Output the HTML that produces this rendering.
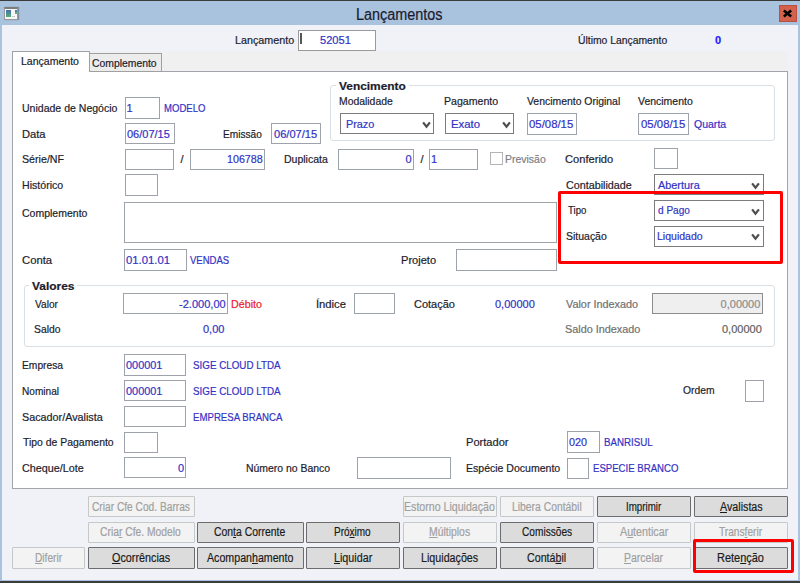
<!DOCTYPE html><html><head><meta charset='utf-8'><style>
html,body{margin:0;padding:0;width:800px;height:583px;overflow:hidden;background:#f1f1f8}
.b{position:absolute}.t{position:absolute;white-space:nowrap;transform-origin:0 0;-webkit-text-stroke:0.2px currentColor;font-family:"Liberation Sans",sans-serif}
u{text-decoration:underline;text-underline-offset:1px}
</style></head><body>
<div class='b' style='left:0px;top:0px;width:800px;height:583px;background:#a9c3de'></div>
<div class='b' style='left:0px;top:0px;width:800px;height:1px;background:#3c3c3c'></div>
<div class='b' style='left:0px;top:581px;width:800px;height:2px;background:#3c3c3c'></div>
<div class='b' style='left:2px;top:25px;width:796px;height:555px;background:#f1f1f8'></div>
<div class='b' style='left:4px;top:7px;width:14px;height:13px;background:#f7f7f7;border:1px solid #9a9a9a;border-top:2px solid #7c7c7c;box-sizing:border-box;box-shadow:1px 0 1px #7a8aa0'></div>
<div class='b' style='left:6px;top:10px;width:5px;height:7px;background:linear-gradient(#4a6db8,#52b070)'></div>
<div class='b' style='left:15px;top:10px;width:1.6px;height:4px;background:linear-gradient(#4a70b8,#60c070)'></div>
<div class='b' style='left:12px;top:16px;width:3px;height:1px;background:#c8c8c8'></div>
<div class='b' style='left:779px;top:5px;width:18px;height:17px;background:#d4614b;border:1px solid #b85040;box-sizing:border-box'></div>
<div class='b' style='left:298px;top:30px;width:78px;height:21px;background:#fff;border:1px solid #9a9a9a;box-sizing:border-box'></div>
<div class='b' style='left:300px;top:33px;width:2px;height:11px;background:#555'></div>
<div class='b' style='left:12px;top:51px;width:776px;height:20px;background:#f0f0f0'></div>
<div class='b' style='left:12px;top:71px;width:776px;height:418px;background:#fff;border:1px solid #a2a3ab;box-sizing:border-box'></div>
<div class='b' style='left:89px;top:53px;width:73px;height:19px;background:#ececec;border:1px solid #a0a0a0;box-sizing:border-box'></div>
<div class='b' style='left:12px;top:51px;width:78px;height:21px;background:#fff;border:1px solid #a0a0a8;border-bottom:none;box-sizing:border-box'></div>
<div class='b' style='left:330px;top:85px;width:445px;height:56px;border:1px solid #d8e0e6;border-radius:3px;box-sizing:border-box'></div>
<div class='b' style='left:336px;top:80px;width:73px;height:10px;background:#fff'></div>
<div class='b' style='left:340px;top:113px;width:94px;height:21px;background:#fff;border:1px solid #7c7c7c;box-sizing:border-box'></div>
<div class='b' style='left:445px;top:113px;width:69px;height:21px;background:#fff;border:1px solid #7c7c7c;box-sizing:border-box'></div>
<div class='b' style='left:527px;top:113px;width:50px;height:21.5px;background:#fff;border:1px solid #9ea2aa;box-sizing:border-box'></div>
<div class='b' style='left:638px;top:113px;width:51px;height:21.5px;background:#fff;border:1px solid #9ea2aa;box-sizing:border-box'></div>
<div class='b' style='left:124.5px;top:97px;width:35.5px;height:21.5px;background:#fff;border:1px solid #9ea2aa;box-sizing:border-box'></div>
<div class='b' style='left:124.5px;top:122.5px;width:50px;height:21.5px;background:#fff;border:1px solid #9ea2aa;box-sizing:border-box'></div>
<div class='b' style='left:271px;top:122.5px;width:50px;height:21.5px;background:#fff;border:1px solid #9ea2aa;box-sizing:border-box'></div>
<div class='b' style='left:124.5px;top:148.75px;width:49.5px;height:20.75px;background:#fff;border:1px solid #9ea2aa;box-sizing:border-box'></div>
<div class='b' style='left:190px;top:148.75px;width:74.5px;height:20.75px;background:#fff;border:1px solid #9ea2aa;box-sizing:border-box'></div>
<div class='b' style='left:338px;top:148.75px;width:75.5px;height:20.75px;background:#fff;border:1px solid #9ea2aa;box-sizing:border-box'></div>
<div class='b' style='left:429px;top:148.75px;width:49px;height:20.75px;background:#fff;border:1px solid #9ea2aa;box-sizing:border-box'></div>
<div class='b' style='left:490px;top:152.2px;width:13px;height:12.8px;background:#fff;border:1px solid #b4b4b4;box-sizing:border-box'></div>
<div class='b' style='left:653.5px;top:148.4px;width:24px;height:21px;background:#fff;border:1px solid #9ea2aa;box-sizing:border-box'></div>
<div class='b' style='left:653.5px;top:174.4px;width:110.1px;height:21.1px;background:#fff;border:1px solid #7c7c7c;box-sizing:border-box'></div>
<div class='b' style='left:124.5px;top:174.25px;width:33.5px;height:21.25px;background:#fff;border:1px solid #9ea2aa;box-sizing:border-box'></div>
<div class='b' style='left:124px;top:201.6px;width:433px;height:41.4px;background:#fff;border:1px solid #9ea2aa;box-sizing:border-box'></div>
<div class='b' style='left:653.5px;top:200px;width:110.1px;height:21.2px;background:#fff;border:1px solid #7c7c7c;box-sizing:border-box'></div>
<div class='b' style='left:653.5px;top:225.7px;width:110.1px;height:20.9px;background:#fff;border:1px solid #7c7c7c;box-sizing:border-box'></div>
<div class='b' style='left:124px;top:249px;width:62.5px;height:21.6px;background:#fff;border:1px solid #9ea2aa;box-sizing:border-box'></div>
<div class='b' style='left:455.75px;top:249.25px;width:101.25px;height:21.5px;background:#fff;border:1px solid #9ea2aa;box-sizing:border-box'></div>
<div class='b' style='left:24px;top:285px;width:751px;height:62px;border:1px solid #d8e0e6;border-radius:3px;box-sizing:border-box'></div>
<div class='b' style='left:29px;top:280px;width:48px;height:11px;background:#fff'></div>
<div class='b' style='left:123.2px;top:293px;width:104.8px;height:21.25px;background:#fff;border:1px solid #9ea2aa;box-sizing:border-box'></div>
<div class='b' style='left:353.6px;top:293px;width:41.4px;height:21.1px;background:#fff;border:1px solid #9ea2aa;box-sizing:border-box'></div>
<div class='b' style='left:652.2px;top:292.9px;width:110.4px;height:21.6px;background:#efefef;border:1px solid #8c8c8c;box-sizing:border-box'></div>
<div class='b' style='left:124.2px;top:354.2px;width:62.3px;height:21.4px;background:#fff;border:1px solid #9ea2aa;box-sizing:border-box'></div>
<div class='b' style='left:124.2px;top:380.1px;width:62.3px;height:21px;background:#fff;border:1px solid #9ea2aa;box-sizing:border-box'></div>
<div class='b' style='left:744.6px;top:380.3px;width:19.4px;height:21.5px;background:#fff;border:1px solid #9ea2aa;box-sizing:border-box'></div>
<div class='b' style='left:124.2px;top:406px;width:62.3px;height:21px;background:#fff;border:1px solid #9ea2aa;box-sizing:border-box'></div>
<div class='b' style='left:124.2px;top:431.5px;width:33.6px;height:21px;background:#fff;border:1px solid #9ea2aa;box-sizing:border-box'></div>
<div class='b' style='left:567.3px;top:431px;width:33px;height:22.3px;background:#fff;border:1px solid #9ea2aa;box-sizing:border-box'></div>
<div class='b' style='left:124.2px;top:457.1px;width:62.3px;height:21.4px;background:#fff;border:1px solid #9ea2aa;box-sizing:border-box'></div>
<div class='b' style='left:356.9px;top:457px;width:94.5px;height:21.6px;background:#fff;border:1px solid #9ea2aa;box-sizing:border-box'></div>
<div class='b' style='left:567.3px;top:457.5px;width:21.8px;height:21px;background:#fff;border:1px solid #9ea2aa;box-sizing:border-box'></div>
<div class='b' style='left:88px;top:496px;width:106.5px;height:21px;background:#f3f3f3;border:1px solid #c4c8c8;border-radius:1px;box-sizing:border-box'></div>
<div class='b' style='left:403px;top:496px;width:94px;height:21px;background:#f3f3f3;border:1px solid #c4c8c8;border-radius:1px;box-sizing:border-box'></div>
<div class='b' style='left:499.5px;top:496px;width:94.5px;height:21px;background:#f3f3f3;border:1px solid #c4c8c8;border-radius:1px;box-sizing:border-box'></div>
<div class='b' style='left:597px;top:496px;width:93.5px;height:21px;background:#dcdcdc;border:1px solid #6c6c6c;border-radius:1px;box-sizing:border-box'></div>
<div class='b' style='left:694px;top:496px;width:93.5px;height:21px;background:#dcdcdc;border:1px solid #6c6c6c;border-radius:1px;box-sizing:border-box'></div>
<div class='b' style='left:88px;top:521.5px;width:106.5px;height:21.5px;background:#f3f3f3;border:1px solid #c4c8c8;border-radius:1px;box-sizing:border-box'></div>
<div class='b' style='left:196.5px;top:521.5px;width:107px;height:21.5px;background:#dcdcdc;border:1px solid #6c6c6c;border-radius:1px;box-sizing:border-box'></div>
<div class='b' style='left:306px;top:521.5px;width:94px;height:21.5px;background:#dcdcdc;border:1px solid #6c6c6c;border-radius:1px;box-sizing:border-box'></div>
<div class='b' style='left:403px;top:521.5px;width:94px;height:21.5px;background:#f3f3f3;border:1px solid #c4c8c8;border-radius:1px;box-sizing:border-box'></div>
<div class='b' style='left:499.5px;top:521.5px;width:94.5px;height:21.5px;background:#dcdcdc;border:1px solid #6c6c6c;border-radius:1px;box-sizing:border-box'></div>
<div class='b' style='left:597px;top:521.5px;width:93.5px;height:21.5px;background:#f3f3f3;border:1px solid #c4c8c8;border-radius:1px;box-sizing:border-box'></div>
<div class='b' style='left:694px;top:521.5px;width:93.5px;height:21.5px;background:#f3f3f3;border:1px solid #c4c8c8;border-radius:1px;box-sizing:border-box'></div>
<div class='b' style='left:12px;top:547px;width:73px;height:22px;background:#f3f3f3;border:1px solid #c4c8c8;border-radius:1px;box-sizing:border-box'></div>
<div class='b' style='left:88px;top:547px;width:106.5px;height:22px;background:#dcdcdc;border:1px solid #6c6c6c;border-radius:1px;box-sizing:border-box'></div>
<div class='b' style='left:196.5px;top:547px;width:107px;height:22px;background:#dcdcdc;border:1px solid #6c6c6c;border-radius:1px;box-sizing:border-box'></div>
<div class='b' style='left:306px;top:547px;width:94px;height:22px;background:#dcdcdc;border:1px solid #6c6c6c;border-radius:1px;box-sizing:border-box'></div>
<div class='b' style='left:403px;top:547px;width:94px;height:22px;background:#dcdcdc;border:1px solid #6c6c6c;border-radius:1px;box-sizing:border-box'></div>
<div class='b' style='left:499.5px;top:547px;width:94.5px;height:22px;background:#dcdcdc;border:1px solid #6c6c6c;border-radius:1px;box-sizing:border-box'></div>
<div class='b' style='left:597px;top:547px;width:93.5px;height:22px;background:#f3f3f3;border:1px solid #c4c8c8;border-radius:1px;box-sizing:border-box'></div>
<div class='b' style='left:694px;top:547px;width:93.5px;height:22px;background:#dcdcdc;border:1px solid #6c6c6c;border-radius:1px;box-sizing:border-box'></div>
<div class='b' style='left:558px;top:191px;width:225px;height:73px;border:3px solid #f00;border-radius:2px;box-sizing:border-box'></div>
<div class='b' style='left:693px;top:539.3px;width:101.3px;height:34.2px;border:3px solid #f00;border-radius:2px;box-sizing:border-box'></div>
<svg class='b' style='left:421.5px;top:120.7px' width='9' height='8' viewBox='0 0 9 8'><path d='M1.1 1.3 L4.5 5.7 L7.9 1.3' fill='none' stroke='#4e4e4e' stroke-width='2.2'/></svg>
<svg class='b' style='left:501.5px;top:120.7px' width='9' height='8' viewBox='0 0 9 8'><path d='M1.1 1.3 L4.5 5.7 L7.9 1.3' fill='none' stroke='#4e4e4e' stroke-width='2.2'/></svg>
<svg class='b' style='left:751.1px;top:182.14999999999998px' width='9' height='8' viewBox='0 0 9 8'><path d='M1.1 1.3 L4.5 5.7 L7.9 1.3' fill='none' stroke='#4e4e4e' stroke-width='2.2'/></svg>
<svg class='b' style='left:751.1px;top:207.79999999999998px' width='9' height='8' viewBox='0 0 9 8'><path d='M1.1 1.3 L4.5 5.7 L7.9 1.3' fill='none' stroke='#4e4e4e' stroke-width='2.2'/></svg>
<svg class='b' style='left:751.1px;top:233.34999999999997px' width='9' height='8' viewBox='0 0 9 8'><path d='M1.1 1.3 L4.5 5.7 L7.9 1.3' fill='none' stroke='#4e4e4e' stroke-width='2.2'/></svg>
<svg class='b' style='left:781px;top:8px' width='13' height='11' viewBox='0 0 13 11'><path d='M2.8 2.5 L10.2 8.5 M10.2 2.5 L2.8 8.5' stroke='#000' stroke-width='2.5' stroke-linecap='butt'/></svg>
<div class='t' style='left:356.35px;top:6.51px;font-size:16px;line-height:16px;transform:scale(0.9000,1.0);color:#1a1a30;font-weight:normal'>Lançamentos</div>
<div class='t' style='left:235.22px;top:35.14px;font-size:11px;line-height:11px;transform:scale(0.9763,1.0);color:#1c1c2c;font-weight:normal'>Lançamento</div>
<div class='t' style='left:320.29px;top:35.14px;font-size:11px;line-height:11px;transform:scale(1.0103,1.0);color:#3232c4;font-weight:normal'>52051</div>
<div class='t' style='left:577.81px;top:35.44px;font-size:11px;line-height:11px;transform:scale(0.9415,1.0);color:#1c1c2c;font-weight:normal'>Último Lançamento</div>
<div class='t' style='left:715.00px;top:35.44px;font-size:11px;line-height:11px;transform:scale(1.0000,1.0);color:#1e1eff;font-weight:bold'>0</div>
<div class='t' style='left:20.64px;top:56.14px;font-size:11px;line-height:11px;transform:scale(0.9576,1.0);color:#1c1c2c;font-weight:normal'>Lançamento</div>
<div class='t' style='left:91.96px;top:58.44px;font-size:11px;line-height:11px;transform:scale(0.9433,1.0);color:#1c1c2c;font-weight:normal'>Complemento</div>
<div class='t' style='left:338.75px;top:80.82px;font-size:11.5px;line-height:11.5px;transform:scale(1.0352,1.0);color:#1c1c2c;font-weight:bold'>Vencimento</div>
<div class='t' style='left:338.66px;top:96.44px;font-size:11px;line-height:11px;transform:scale(0.9446,1.0);color:#1c1c2c;font-weight:normal'>Modalidade</div>
<div class='t' style='left:443.54px;top:96.44px;font-size:11px;line-height:11px;transform:scale(0.9636,1.0);color:#1c1c2c;font-weight:normal'>Pagamento</div>
<div class='t' style='left:526.70px;top:95.94px;font-size:11px;line-height:11px;transform:scale(0.9469,1.0);color:#1c1c2c;font-weight:normal'>Vencimento Original</div>
<div class='t' style='left:638.00px;top:95.94px;font-size:11px;line-height:11px;transform:scale(0.9518,1.0);color:#1c1c2c;font-weight:normal'>Vencimento</div>
<div class='t' style='left:346.21px;top:118.54px;font-size:11px;line-height:11px;transform:scale(0.9852,1.0);color:#3232c4;font-weight:normal'>Prazo</div>
<div class='t' style='left:451.17px;top:118.54px;font-size:11px;line-height:11px;transform:scale(1.0333,1.0);color:#3232c4;font-weight:normal'>Exato</div>
<div class='t' style='left:528.80px;top:118.74px;font-size:11px;line-height:11px;transform:scale(1.0337,1.0);color:#3232c4;font-weight:normal'>05/08/15</div>
<div class='t' style='left:640.80px;top:118.74px;font-size:11px;line-height:11px;transform:scale(1.0337,1.0);color:#3232c4;font-weight:normal'>05/08/15</div>
<div class='t' style='left:694.00px;top:118.74px;font-size:11px;line-height:11px;transform:scale(0.9559,1.0);color:#3232c4;font-weight:normal'>Quarta</div>
<div class='t' style='left:22.34px;top:103.44px;font-size:11px;line-height:11px;transform:scale(0.9571,1.0);color:#1c1c2c;font-weight:normal'>Unidade de Negócio</div>
<div class='t' style='left:126.60px;top:103.14px;font-size:11px;line-height:11px;transform:scale(1.0000,1.0);color:#3232c4;font-weight:normal'>1</div>
<div class='t' style='left:164.13px;top:103.14px;font-size:11px;line-height:11px;transform:scale(0.8696,1.0);color:#3232c4;font-weight:normal'>MODELO</div>
<div class='t' style='left:22.39px;top:128.54px;font-size:11px;line-height:11px;transform:scale(1.0136,1.0);color:#1c1c2c;font-weight:normal'>Data</div>
<div class='t' style='left:127.00px;top:128.74px;font-size:11px;line-height:11px;transform:scale(1.0000,1.0);color:#3232c4;font-weight:normal'>06/07/15</div>
<div class='t' style='left:222.68px;top:128.74px;font-size:11px;line-height:11px;transform:scale(0.9195,1.0);color:#1c1c2c;font-weight:normal'>Emissão</div>
<div class='t' style='left:273.60px;top:128.74px;font-size:11px;line-height:11px;transform:scale(1.0093,1.0);color:#3232c4;font-weight:normal'>06/07/15</div>
<div class='t' style='left:22.33px;top:154.24px;font-size:11px;line-height:11px;transform:scale(0.9690,1.0);color:#1c1c2c;font-weight:normal'>Série/NF</div>
<div class='t' style='left:180.50px;top:154.24px;font-size:11px;line-height:11px;transform:scale(1.0000,1.0);color:#1c1c2c;font-weight:normal'>/</div>
<div class='t' style='left:227.03px;top:154.24px;font-size:11px;line-height:11px;transform:scale(0.9714,1.0);color:#3232c4;font-weight:normal'>106788</div>
<div class='t' style='left:284.04px;top:154.24px;font-size:11px;line-height:11px;transform:scale(0.9556,1.0);color:#1c1c2c;font-weight:normal'>Duplicata</div>
<div class='t' style='left:405.50px;top:154.24px;font-size:11px;line-height:11px;transform:scale(1.0000,1.0);color:#3232c4;font-weight:normal'>0</div>
<div class='t' style='left:420.50px;top:154.24px;font-size:11px;line-height:11px;transform:scale(1.0000,1.0);color:#1c1c2c;font-weight:normal'>/</div>
<div class='t' style='left:431.00px;top:154.24px;font-size:11px;line-height:11px;transform:scale(1.0000,1.0);color:#3232c4;font-weight:normal'>1</div>
<div class='t' style='left:504.55px;top:153.94px;font-size:11px;line-height:11px;transform:scale(0.9524,1.0);color:#7e7e86;font-weight:normal'>Previsão</div>
<div class='t' style='left:565.49px;top:154.24px;font-size:11px;line-height:11px;transform:scale(1.0109,1.0);color:#1c1c2c;font-weight:normal'>Conferido</div>
<div class='t' style='left:565.52px;top:179.64px;font-size:11px;line-height:11px;transform:scale(0.9773,1.0);color:#1c1c2c;font-weight:normal'>Contabilidade</div>
<div class='t' style='left:658.25px;top:179.74px;font-size:11px;line-height:11px;transform:scale(0.9893,1.0);color:#3232c4;font-weight:normal'>Abertura</div>
<div class='t' style='left:22.34px;top:179.69px;font-size:11px;line-height:11px;transform:scale(0.9643,1.0);color:#1c1c2c;font-weight:normal'>Histórico</div>
<div class='t' style='left:22.44px;top:207.54px;font-size:11px;line-height:11px;transform:scale(0.9552,1.0);color:#1c1c2c;font-weight:normal'>Complemento</div>
<div class='t' style='left:567.60px;top:205.34px;font-size:11px;line-height:11px;transform:scale(0.8762,1.0);color:#1c1c2c;font-weight:normal'>Tipo</div>
<div class='t' style='left:658.00px;top:205.34px;font-size:11px;line-height:11px;transform:scale(0.9143,1.0);color:#3232c4;font-weight:normal'>d Pago</div>
<div class='t' style='left:566.05px;top:230.94px;font-size:11px;line-height:11px;transform:scale(0.9524,1.0);color:#1c1c2c;font-weight:normal'>Situação</div>
<div class='t' style='left:657.04px;top:230.94px;font-size:11px;line-height:11px;transform:scale(0.9565,1.0);color:#3232c4;font-weight:normal'>Liquidado</div>
<div class='t' style='left:22.38px;top:254.94px;font-size:11px;line-height:11px;transform:scale(1.0250,1.0);color:#1c1c2c;font-weight:normal'>Conta</div>
<div class='t' style='left:126.40px;top:254.94px;font-size:11px;line-height:11px;transform:scale(1.0286,1.0);color:#3232c4;font-weight:normal'>01.01.01</div>
<div class='t' style='left:190.00px;top:254.94px;font-size:11px;line-height:11px;transform:scale(0.8667,1.0);color:#3232c4;font-weight:normal'>VENDAS</div>
<div class='t' style='left:400.99px;top:254.94px;font-size:11px;line-height:11px;transform:scale(1.0074,1.0);color:#1c1c2c;font-weight:normal'>Projeto</div>
<div class='t' style='left:31.90px;top:280.52px;font-size:11.5px;line-height:11.5px;transform:scale(1.0390,1.0);color:#1c1c2c;font-weight:bold'>Valores</div>
<div class='t' style='left:35.00px;top:298.64px;font-size:11px;line-height:11px;transform:scale(0.9200,1.0);color:#1c1c2c;font-weight:normal'>Valor</div>
<div class='t' style='left:179.10px;top:298.84px;font-size:11px;line-height:11px;transform:scale(1.0043,1.0);color:#3232c4;font-weight:normal'>-2.000,00</div>
<div class='t' style='left:230.83px;top:298.84px;font-size:11px;line-height:11px;transform:scale(0.9742,1.0);color:#e8202a;font-weight:normal'>Débito</div>
<div class='t' style='left:315.88px;top:298.84px;font-size:11px;line-height:11px;transform:scale(1.0214,1.0);color:#1c1c2c;font-weight:normal'>Índice</div>
<div class='t' style='left:414.40px;top:298.84px;font-size:11px;line-height:11px;transform:scale(0.9975,1.0);color:#1c1c2c;font-weight:normal'>Cotação</div>
<div class='t' style='left:495.00px;top:298.84px;font-size:11px;line-height:11px;transform:scale(1.0000,1.0);color:#3232c4;font-weight:normal'>0,00000</div>
<div class='t' style='left:565.90px;top:298.84px;font-size:11px;line-height:11px;transform:scale(0.9849,1.0);color:#707070;font-weight:normal'>Valor Indexado</div>
<div class='t' style='left:720.60px;top:298.84px;font-size:11px;line-height:11px;transform:scale(1.0000,1.0);color:#8c8c8c;font-weight:normal'>0,00000</div>
<div class='t' style='left:34.06px;top:324.14px;font-size:11px;line-height:11px;transform:scale(0.9407,1.0);color:#1c1c2c;font-weight:normal'>Saldo</div>
<div class='t' style='left:203.00px;top:324.14px;font-size:11px;line-height:11px;transform:scale(1.0000,1.0);color:#3232c4;font-weight:normal'>0,00</div>
<div class='t' style='left:564.91px;top:324.14px;font-size:11px;line-height:11px;transform:scale(0.9853,1.0);color:#707070;font-weight:normal'>Saldo Indexado</div>
<div class='t' style='left:722.00px;top:324.14px;font-size:11px;line-height:11px;transform:scale(1.0000,1.0);color:#606060;font-weight:normal'>0,00000</div>
<div class='t' style='left:22.47px;top:360.44px;font-size:11px;line-height:11px;transform:scale(0.9326,1.0);color:#1c1c2c;font-weight:normal'>Empresa</div>
<div class='t' style='left:126.30px;top:360.24px;font-size:11px;line-height:11px;transform:scale(0.9917,1.0);color:#3232c4;font-weight:normal'>000001</div>
<div class='t' style='left:192.61px;top:360.24px;font-size:11px;line-height:11px;transform:scale(0.8918,1.0);color:#3232c4;font-weight:normal'>SIGE CLOUD LTDA</div>
<div class='t' style='left:22.48px;top:386.14px;font-size:11px;line-height:11px;transform:scale(0.9179,1.0);color:#1c1c2c;font-weight:normal'>Nominal</div>
<div class='t' style='left:126.30px;top:385.94px;font-size:11px;line-height:11px;transform:scale(0.9917,1.0);color:#3232c4;font-weight:normal'>000001</div>
<div class='t' style='left:192.61px;top:385.94px;font-size:11px;line-height:11px;transform:scale(0.8918,1.0);color:#3232c4;font-weight:normal'>SIGE CLOUD LTDA</div>
<div class='t' style='left:682.80px;top:384.94px;font-size:11px;line-height:11px;transform:scale(0.9364,1.0);color:#1c1c2c;font-weight:normal'>Ordem</div>
<div class='t' style='left:22.42px;top:411.54px;font-size:11px;line-height:11px;transform:scale(0.9802,1.0);color:#1c1c2c;font-weight:normal'>Sacador/Avalista</div>
<div class='t' style='left:192.62px;top:411.54px;font-size:11px;line-height:11px;transform:scale(0.8762,1.0);color:#3232c4;font-weight:normal'>EMPRESA BRANCA</div>
<div class='t' style='left:23.40px;top:437.24px;font-size:11px;line-height:11px;transform:scale(0.9484,1.0);color:#1c1c2c;font-weight:normal'>Tipo de Pagamento</div>
<div class='t' style='left:466.39px;top:437.24px;font-size:11px;line-height:11px;transform:scale(1.0073,1.0);color:#1c1c2c;font-weight:normal'>Portador</div>
<div class='t' style='left:569.30px;top:437.24px;font-size:11px;line-height:11px;transform:scale(0.9833,1.0);color:#3232c4;font-weight:normal'>020</div>
<div class='t' style='left:604.31px;top:437.24px;font-size:11px;line-height:11px;transform:scale(0.8852,1.0);color:#3232c4;font-weight:normal'>BANRISUL</div>
<div class='t' style='left:22.42px;top:462.84px;font-size:11px;line-height:11px;transform:scale(0.9790,1.0);color:#1c1c2c;font-weight:normal'>Cheque/Lote</div>
<div class='t' style='left:178.00px;top:462.74px;font-size:11px;line-height:11px;transform:scale(1.0000,1.0);color:#3232c4;font-weight:normal'>0</div>
<div class='t' style='left:245.55px;top:462.74px;font-size:11px;line-height:11px;transform:scale(0.9483,1.0);color:#1c1c2c;font-weight:normal'>Número no Banco</div>
<div class='t' style='left:466.44px;top:462.74px;font-size:11px;line-height:11px;transform:scale(0.9567,1.0);color:#1c1c2c;font-weight:normal'>Espécie Documento</div>
<div class='t' style='left:593.13px;top:462.74px;font-size:11px;line-height:11px;transform:scale(0.8729,1.0);color:#3232c4;font-weight:normal'>ESPECIE BRANCO</div>
<div class='t' style='left:91.93px;top:500.97px;font-size:12.5px;line-height:12.5px;transform:scale(0.8151,1.0);color:#a0a0a0;font-weight:normal'>Criar Cfe Cod. Barras</div>
<div class='t' style='left:404.15px;top:500.97px;font-size:12.5px;line-height:12.5px;transform:scale(0.8491,1.0);color:#a0a0a0;font-weight:normal'>Estorno Liquidação</div>
<div class='t' style='left:511.92px;top:500.97px;font-size:12.5px;line-height:12.5px;transform:scale(0.8293,1.0);color:#a0a0a0;font-weight:normal'>Libera Contábil</div>
<div class='t' style='left:625.77px;top:500.97px;font-size:12.5px;line-height:12.5px;transform:scale(0.7818,1.0);color:#1a1a1a;font-weight:normal'>Imprimir</div>
<div class='t' style='left:719.75px;top:500.97px;font-size:12.5px;line-height:12.5px;transform:scale(0.8571,1.0);color:#1a1a1a;font-weight:normal'><u>A</u>valistas</div>
<div class='t' style='left:100.43px;top:526.47px;font-size:12.5px;line-height:12.5px;transform:scale(0.8247,1.0);color:#a0a0a0;font-weight:normal'>Cria<u>r</u> Cfe. Modelo</div>
<div class='t' style='left:214.17px;top:526.47px;font-size:12.5px;line-height:12.5px;transform:scale(0.8333,1.0);color:#1a1a1a;font-weight:normal'>Con<u>t</u>a Corrente</div>
<div class='t' style='left:334.20px;top:526.47px;font-size:12.5px;line-height:12.5px;transform:scale(0.8000,1.0);color:#1a1a1a;font-weight:normal'>Pró<u>x</u>imo</div>
<div class='t' style='left:429.17px;top:526.47px;font-size:12.5px;line-height:12.5px;transform:scale(0.8333,1.0);color:#a0a0a0;font-weight:normal'><u>M</u>últiplos</div>
<div class='t' style='left:521.64px;top:526.47px;font-size:12.5px;line-height:12.5px;transform:scale(0.8100,1.0);color:#1a1a1a;font-weight:normal'>Comissões</div>
<div class='t' style='left:619.75px;top:526.47px;font-size:12.5px;line-height:12.5px;transform:scale(0.8571,1.0);color:#a0a0a0;font-weight:normal'>A<u>u</u>tenticar</div>
<div class='t' style='left:719.25px;top:526.47px;font-size:12.5px;line-height:12.5px;transform:scale(0.8113,1.0);color:#a0a0a0;font-weight:normal'>Trans<u>f</u>erir</div>
<div class='t' style='left:34.69px;top:551.97px;font-size:12.5px;line-height:12.5px;transform:scale(0.8125,1.0);color:#a0a0a0;font-weight:normal'><u>D</u>iferir</div>
<div class='t' style='left:111.89px;top:551.97px;font-size:12.5px;line-height:12.5px;transform:scale(0.8636,1.0);color:#1a1a1a;font-weight:normal'><u>O</u>corrências</div>
<div class='t' style='left:207.00px;top:551.97px;font-size:12.5px;line-height:12.5px;transform:scale(0.8515,1.0);color:#1a1a1a;font-weight:normal'>Acompan<u>h</u>amento</div>
<div class='t' style='left:333.64px;top:551.97px;font-size:12.5px;line-height:12.5px;transform:scale(0.8605,1.0);color:#1a1a1a;font-weight:normal'><u>L</u>iquidar</div>
<div class='t' style='left:421.29px;top:551.97px;font-size:12.5px;line-height:12.5px;transform:scale(0.8569,1.0);color:#1a1a1a;font-weight:normal'>Liquidações</div>
<div class='t' style='left:527.10px;top:551.97px;font-size:12.5px;line-height:12.5px;transform:scale(0.8545,1.0);color:#1a1a1a;font-weight:normal'>Contá<u>b</u>il</div>
<div class='t' style='left:623.61px;top:551.97px;font-size:12.5px;line-height:12.5px;transform:scale(0.8391,1.0);color:#a0a0a0;font-weight:normal'><u>P</u>arcelar</div>
<div class='t' style='left:717.07px;top:551.97px;font-size:12.5px;line-height:12.5px;transform:scale(0.8769,1.0);color:#1a1a1a;font-weight:normal'>Rete<u>n</u>ção</div>
</body></html>
